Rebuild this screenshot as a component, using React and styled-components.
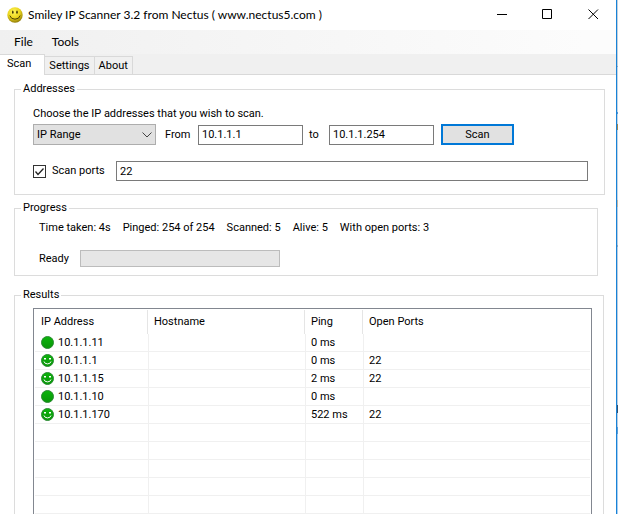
import React from "react";
import styled, { createGlobalStyle } from "styled-components";

const GlobalStyle = createGlobalStyle`
  *, *::before, *::after { box-sizing: border-box; }
  body { margin: 0; background: #fff; }
  button, input, select { font: inherit; color: inherit; margin: 0; }
`;

const Desktop = styled.div`
  display: flex;
  height: 100vh;
  overflow: hidden;
  background: #fff;
  color: #000;
  font: 11px/14px Roboto, "Liberation Sans", sans-serif;
`;

const Window = styled.div`
  flex: 1;
  min-width: 0;
  border-right: 1px solid #1883d7;
`;

const Backdrop = styled.div`
  flex: none;
  width: 1px;
  background: linear-gradient(
    #c3cfdc 0 66px, #8fa6c0 66px 67px, #c3d3e4 67px 112px, #4f94d4 112px 114px,
    #c3d3e4 114px 124px, #a08452 124px 130px, #c3d3e4 130px 200px, #bfb6a8 200px 207px,
    #b9cbe0 207px 245px, #8fa6c0 245px 247px, #b9cbe0 247px 405px, #35506e 405px 413px,
    #b9cbe0 413px 427px, #5b9bd5 427px 434px, #a9cdf0 434px
  );
`;

const TitleBar = styled.header`
  display: flex;
  align-items: center;
  height: 30px;
  padding-left: 7px;
`;

const Title = styled.h1`
  flex: 1;
  margin: 0 0 0 5px;
  font: 12px/16px Lato, "Open Sans", sans-serif;
  white-space: nowrap;
`;

const CaptionButton = styled.button`
  display: grid;
  place-items: center;
  width: 46px;
  height: 30px;
  padding: 0 0 2px;
  border: 0;
  background: transparent;
`;

const MenuBar = styled.nav`
  display: flex;
  height: 24px;
  padding-left: 9px;
  background: linear-gradient(to right, #f0f0f0, #fcfcfc 95%);
`;

const MenuItem = styled.button`
  padding: 0 5px;
  margin-right: 9px;
  border: 0;
  background: transparent;
  font: 12px/24px Lato, "Open Sans", sans-serif;
`;

const TabStrip = styled.div`
  display: flex;
  align-items: flex-end;
  height: 21px;
  background: #f0f0f0;
  box-shadow: inset 0 -1px #d9d9d9;
`;

const Tab = styled.button`
  height: ${(p) => (p.$active ? 21 : 19)}px;
  padding: ${(p) => (p.$active ? "0 13px 2px 7px" : "0 4px")};
  border: solid #d9d9d9;
  border-width: ${(p) => (p.$active ? "1px 1px 0 0" : "1px 1px 1px 0")};
  background: ${(p) => (p.$active ? "#fff" : "#f0f0f0")};
`;

const Page = styled.main`
  padding: 7px 11px 0 14px;
`;

const Group = styled.fieldset`
  min-width: 0;
  margin: 0 ${(p) => p.$inset || 0}px ${(p) => p.$after || 0}px 0;
  padding: 0 16px ${(p) => p.$bottom || 0}px 18px;
  border: 1px solid #dcdcdc;

  > legend {
    margin-left: -12px;
    padding: 0 2px;
  }
`;

const Hint = styled.p`
  margin: 11px 0 3px;
`;

const Row = styled.div`
  display: flex;
  align-items: center;
`;

const SelectBox = styled.div`
  display: grid;
  align-items: center;
  width: 123px;
  height: 21px;

  > * { grid-area: 1 / 1; }
  > svg { justify-self: end; margin-right: 4px; pointer-events: none; }
`;

const Select = styled.select`
  appearance: none;
  width: 100%;
  height: 21px;
  padding: 0 3px;
  border: 1px solid #adadad;
  border-radius: 0;
  background: #e1e1e1;
`;

const FieldLabel = styled.label`
  width: ${(p) => p.$width}px;
  padding-left: ${(p) => p.$indent}px;
`;

const TextBox = styled.input`
  ${(p) => (p.$grow ? "flex: 1; min-width: 0;" : "width: 105px;")}
  height: 20px;
  padding: 0 3px;
  border: 1px solid #7a7a7a;
  background: #fff;
`;

const ScanButton = styled.button`
  width: 73px;
  height: 21px;
  margin-left: 7px;
  padding: 0;
  border: 2px solid #0078d7;
  background: #e1e1e1;
`;

const PortsRow = styled(Row)`
  margin-top: 16px;
`;

const CheckBox = styled.span`
  display: grid;
  width: 13px;
  height: 13px;

  > * { grid-area: 1 / 1; }
  > svg { pointer-events: none; visibility: hidden; }
  > input:checked + svg { visibility: visible; }
`;

const CheckInput = styled.input`
  appearance: none;
  width: 13px;
  height: 13px;
  border: 1px solid #333;
  background: #fff;
`;

const Stats = styled.div`
  display: flex;
  gap: 12px;
  padding: 6px 0 0 6px;
  white-space: nowrap;
`;

const ProgressRow = styled(Row)`
  margin-top: 15px;
  padding-left: 6px;
`;

const StatusLabel = styled.label`
  width: 41px;
`;

const Meter = styled.progress`
  appearance: none;
  width: 200px;
  height: 17px;
  border: 1px solid #bcbcbc;
  background: #e6e6e6;

  &::-webkit-progress-bar { background: #e6e6e6; }
  &::-webkit-progress-value { background: #06b025; }
`;

const ListBox = styled.div`
  margin: 6px -5px 0 0;
  padding: 1px;
  border: 1px solid #828790;
`;

const Table = styled.table`
  width: 100%;
  table-layout: fixed;
  border-collapse: separate;
  border-spacing: 0;
`;

const Column = styled.col`
  width: ${(p) => (p.$width ? `${p.$width}px` : "auto")};
`;

const HeadCell = styled.th`
  height: 24px;
  padding: 0 5px;
  text-align: left;
  font-weight: 400;

  &:first-child { padding-left: 6px; }
  &:not(:last-child) {
    border-right: 1px solid #fff;
    box-shadow: inset -1px 0 #e5e5e5;
  }
`;

const Cell = styled.td`
  height: 18px;
  padding: 0 5px;
  border-bottom: 1px solid #f0f0f0;

  &:first-child { padding-left: 6px; }
  &:not(:last-child) { border-right: 1px solid #f0f0f0; }
`;

const Host = styled.span`
  display: flex;
  align-items: center;
  gap: 4px;
`;

function SmileyLogo() {
  return (
    <svg width="16" height="16" viewBox="0 0 16 16" aria-hidden="true">
      <defs>
        <radialGradient id="sun" cx=".42" cy=".3" r=".72">
          <stop offset="0" stopColor="#fff45a" />
          <stop offset=".55" stopColor="#ead51c" />
          <stop offset="1" stopColor="#8f7a08" />
        </radialGradient>
      </defs>
      <circle cx="8" cy="8" r="7.7" fill="url(#sun)" />
      <ellipse cx="5.8" cy="5.2" rx=".8" ry="1.6" fill="#3d3504" />
      <ellipse cx="10" cy="5.2" rx=".8" ry="1.6" fill="#3d3504" />
      <path d="M2.8 8.6Q4 12.2 8 12.2T13.2 8.6" fill="none" stroke="#4c4205" strokeWidth="1" />
    </svg>
  );
}

function StatusFace({ smiling }) {
  return (
    <svg width="13" height="13" viewBox="0 0 13 13" role="img" aria-label={smiling ? "Open ports" : "Alive"}>
      <defs>
        <linearGradient id="leaf" x1="0" y1="0" x2="0" y2="1">
          <stop offset="0" stopColor="#0cb40c" />
          <stop offset="1" stopColor="#089608" />
        </linearGradient>
      </defs>
      <circle cx="6.5" cy="6.5" r="6" fill="url(#leaf)" stroke="#2d8a35" />
      {smiling && (
        <g fill="#fff">
          <rect x="3" y="4" width="2" height="1.5" />
          <rect x="8" y="4" width="2" height="1.5" />
          <path d="M3 7.5Q3.6 9.9 6.5 9.9T10 7.5" fill="none" stroke="#fff" />
        </g>
      )}
    </svg>
  );
}

const hosts = [
  { ip: "10.1.1.11", ping: "0 ms", ports: "" },
  { ip: "10.1.1.1", ping: "0 ms", ports: "22" },
  { ip: "10.1.1.15", ping: "2 ms", ports: "22" },
  { ip: "10.1.1.10", ping: "0 ms", ports: "" },
  { ip: "10.1.1.170", ping: "522 ms", ports: "22" },
];
const emptyRows = Array.from({ length: 8 }, (_, i) => i);
const stats = ["Time taken: 4s", "Pinged: 254 of 254", "Scanned: 5", "Alive: 5", "With open ports: 3"];

export default function App() {
  return (
    <Desktop>
      <GlobalStyle />
      <Window>
        <TitleBar>
          <SmileyLogo />
          <Title>Smiley IP Scanner 3.2 from Nectus ( www.nectus5.com )</Title>
          <CaptionButton aria-label="Minimize">
            <svg width="11" height="11"><path d="M1 5.5H11" stroke="#000" /></svg>
          </CaptionButton>
          <CaptionButton aria-label="Maximize">
            <svg width="11" height="11"><path d="M.5 .5H9.5V9.5H.5Z" fill="none" stroke="#000" /></svg>
          </CaptionButton>
          <CaptionButton aria-label="Close">
            <svg width="11" height="11"><path d="M.5 .5L10 10M10 .5L.5 10" stroke="#000" /></svg>
          </CaptionButton>
        </TitleBar>
        <MenuBar>
          <MenuItem>File</MenuItem>
          <MenuItem>Tools</MenuItem>
        </MenuBar>
        <TabStrip role="tablist">
          <Tab role="tab" aria-selected="true" $active>Scan</Tab>
          <Tab role="tab" aria-selected="false">Settings</Tab>
          <Tab role="tab" aria-selected="false">About</Tab>
        </TabStrip>
        <Page>
          <Group $bottom={13} $after={6}>
            <legend>Addresses</legend>
            <Hint>Choose the IP addresses that you wish to scan.</Hint>
            <Row>
              <SelectBox>
                <Select aria-label="Address type" defaultValue="range">
                  <option value="range">IP Range</option>
                </Select>
                <svg width="10" height="6"><path d="M.5 .5L5 5L9.5 .5" fill="none" stroke="#444" /></svg>
              </SelectBox>
              <FieldLabel htmlFor="from" $width={42} $indent={9}>From</FieldLabel>
              <TextBox id="from" defaultValue="10.1.1.1" />
              <FieldLabel htmlFor="to" $width={26} $indent={6}>to</FieldLabel>
              <TextBox id="to" defaultValue="10.1.1.254" />
              <ScanButton>Scan</ScanButton>
            </Row>
            <PortsRow>
              <CheckBox>
                <CheckInput id="scan-ports" type="checkbox" defaultChecked />
                <svg width="13" height="13"><path d="M2.5 6.5L5 9.5L10.5 3.5" fill="none" stroke="#222" strokeWidth="1.3" /></svg>
              </CheckBox>
              <FieldLabel htmlFor="scan-ports" $width={70} $indent={6}>Scan ports</FieldLabel>
              <TextBox aria-label="Ports" defaultValue="22" $grow />
            </PortsRow>
          </Group>
          <Group $inset={7} $bottom={8} $after={12}>
            <legend>Progress</legend>
            <Stats>
              {stats.map((s) => <span key={s}>{s}</span>)}
            </Stats>
            <ProgressRow>
              <StatusLabel htmlFor="progress">Ready</StatusLabel>
              <Meter id="progress" value={0} max={100} />
            </ProgressRow>
          </Group>
          <Group $inset={1}>
            <legend>Results</legend>
            <ListBox>
              <Table>
                <colgroup>
                  <Column $width={114} />
                  <Column $width={157} />
                  <Column $width={58} />
                  <Column />
                </colgroup>
                <thead>
                  <tr>
                    <HeadCell>IP Address</HeadCell>
                    <HeadCell>Hostname</HeadCell>
                    <HeadCell>Ping</HeadCell>
                    <HeadCell>Open Ports</HeadCell>
                  </tr>
                </thead>
                <tbody>
                  {hosts.map((h) => (
                    <tr key={h.ip}>
                      <Cell><Host><StatusFace smiling={h.ports !== ""} />{h.ip}</Host></Cell>
                      <Cell />
                      <Cell>{h.ping}</Cell>
                      <Cell>{h.ports}</Cell>
                    </tr>
                  ))}
                  {emptyRows.map((i) => (
                    <tr key={i}><Cell /><Cell /><Cell /><Cell /></tr>
                  ))}
                </tbody>
              </Table>
            </ListBox>
          </Group>
        </Page>
      </Window>
      <Backdrop />
    </Desktop>
  );
}
